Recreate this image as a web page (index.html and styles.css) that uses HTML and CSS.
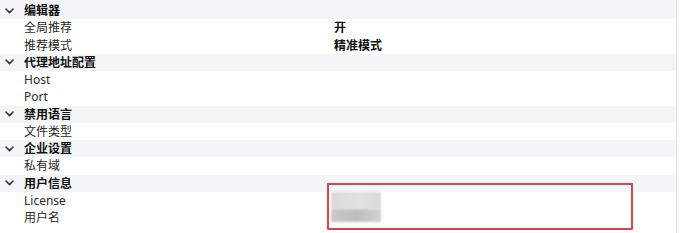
FILE: index.html
```html
<!DOCTYPE html>
<html lang="zh">

<head>
    <meta charset="utf-8">
    <meta name="viewport" content="width=device-width, initial-scale=1.0">
    <title>设置</title>

    <link rel="stylesheet" href="styles.css">
</head>

<body>
    <main class="panel">
        <section class="group">
            <div class="row head">
                <svg class="arrow" width="9" height="6" viewBox="0 0 9 6"><polyline points="1,1 4.5,4.6 8,1" /></svg>
                <span class="label">编辑器</span>
            </div>
            <div class="row item"><span class="label">全局推荐</span><span class="value">开</span></div>
            <div class="row item"><span class="label">推荐模式</span><span class="value">精准模式</span></div>
        </section>
        <section class="group">
            <div class="row head">
                <svg class="arrow" width="9" height="6" viewBox="0 0 9 6"><polyline points="1,1 4.5,4.6 8,1" /></svg>
                <span class="label">代理地址配置</span>
            </div>
            <div class="row item"><span class="label">Host</span></div>
            <div class="row item"><span class="label">Port</span></div>
        </section>
        <section class="group">
            <div class="row head">
                <svg class="arrow" width="9" height="6" viewBox="0 0 9 6"><polyline points="1,1 4.5,4.6 8,1" /></svg>
                <span class="label">禁用语言</span>
            </div>
            <div class="row item"><span class="label">文件类型</span></div>
        </section>
        <section class="group">
            <div class="row head">
                <svg class="arrow" width="9" height="6" viewBox="0 0 9 6"><polyline points="1,1 4.5,4.6 8,1" /></svg>
                <span class="label">企业设置</span>
            </div>
            <div class="row item"><span class="label">私有域</span></div>
        </section>
        <section class="group">
            <div class="row head">
                <svg class="arrow" width="9" height="6" viewBox="0 0 9 6"><polyline points="1,1 4.5,4.6 8,1" /></svg>
                <span class="label">用户信息</span>
            </div>
            <div class="row item"><span class="label">License</span><span class="value"><span class="blur top"></span></span></div>
            <div class="row item"><span class="label">用户名</span><span class="value"><span class="blur bottom"></span></span></div>
        </section>

        <!-- 标注框 -->
        <div class="mark"></div>
    </main>
</body></html>
```

FILE: styles.css
```css
html,
body {
    margin: 0;
    padding: 0;
    background: #ffffff;
}

body {
    font-family: "Noto Sans", "Noto Sans CJK SC", sans-serif;
    font-size: 12px;
    color: #222222;
}

.panel {
    position: relative;
    width: 677px;
    height: 233px;
    padding-top: 2px;
    box-sizing: border-box;
    border-right: 1px solid #e2e4e8;
    background: #ffffff;
}

.row {
    display: grid;
    grid-template-columns: 24px 310px 1fr;
    align-items: center;
    height: 17.25px;
    line-height: 17px;
    white-space: nowrap;
}

.head {
    background: #f3f5f8;
    font-weight: bold;
    color: #111111;
}

.group:first-child .head {
    margin-top: -2px;
    padding-top: 2px;
}

.arrow {
    justify-self: start;
    margin-left: 5px;
    fill: none;
    stroke: #3a3a3a;
    stroke-width: 1.6;
    stroke-linecap: round;
    stroke-linejoin: round;
}

.item .label {
    grid-column: 2;
    color: #2a2a2a;
}

.value {
    grid-column: 3;
    font-weight: bold;
    color: #111111;
    height: 100%;
}

.blur {
    display: block;
    width: 50px;
    margin-left: -3px;
    filter: blur(0.8px);
}

.blur.top {
    height: 17px;
    margin-top: 0.5px;
    background: linear-gradient(90deg, #dadada 0, #e2e2e2 60%, #d8d8d8 100%);
}

.blur.bottom {
    height: 13px;
    background: linear-gradient(90deg, #c9c9c9 0, #bdbdbd 50%, #d2d2d2 100%);
}

.mark {
    position: absolute;
    left: 327px;
    top: 183px;
    width: 302px;
    height: 43px;
    border: 2px solid #d24747;
    border-radius: 1px;
}
```
